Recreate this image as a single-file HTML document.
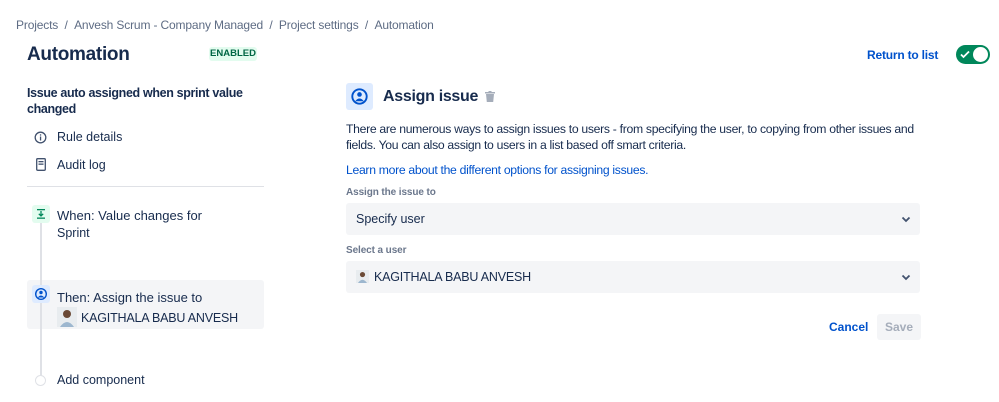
<!DOCTYPE html>
<html><head><meta charset="utf-8"><style>
*{margin:0;padding:0;box-sizing:border-box}
body{width:999px;height:402px;background:#fff;font-family:"Liberation Sans",sans-serif;color:#172b4d;position:relative;overflow:hidden;font-size:12.5px}
.a{position:absolute;white-space:nowrap}
.sel{position:absolute;left:346px;width:574px;height:32px;background:#f4f5f7;border-radius:3px}
.chev{position:absolute;right:8px;top:10px}
</style></head><body>
<div class="a" style="left:16px;top:18px;color:#5e6c84;font-size:12px;letter-spacing:-0.15px">Projects&nbsp;&nbsp;/&nbsp;&nbsp;Anvesh Scrum - Company Managed&nbsp;&nbsp;/&nbsp;&nbsp;Project settings&nbsp;&nbsp;/&nbsp;&nbsp;Automation</div>
<div class="a" style="left:27px;top:44px;font-size:19px;font-weight:bold;letter-spacing:-0.3px">Automation</div>
<div class="a" style="left:209px;top:47px;width:48px;height:14px;background:#e3fcef;color:#006644;font-size:9.5px;font-weight:bold;text-align:center;line-height:14px;border-radius:3px">ENABLED</div>
<div class="a" style="left:27px;top:85px;font-size:12.5px;font-weight:bold;line-height:16px;letter-spacing:-0.35px">Issue auto assigned when sprint value<br>changed</div>
<svg class="a" style="left:34px;top:131px" width="13" height="13" viewBox="0 0 13 13"><circle cx="6.5" cy="6.5" r="5.3" fill="none" stroke="#42526e" stroke-width="1.3"/><rect x="5.9" y="5.5" width="1.3" height="4" fill="#42526e"/><rect x="5.9" y="3.3" width="1.3" height="1.3" fill="#42526e"/></svg>
<div class="a" style="left:57px;top:130px">Rule details</div>
<svg class="a" style="left:36px;top:158px" width="10" height="13" viewBox="0 0 10 13"><rect x="0.7" y="0.7" width="8.6" height="11.6" rx="1" fill="none" stroke="#42526e" stroke-width="1.3"/><rect x="2.5" y="3" width="5" height="1.3" fill="#42526e"/><rect x="2.5" y="5.5" width="5" height="1.3" fill="#42526e"/></svg>
<div class="a" style="left:57px;top:158px">Audit log</div>
<div class="a" style="left:27px;top:186px;width:237px;height:1px;background:#dfe1e6"></div>
<div class="a" style="left:27px;top:280px;width:237px;height:49px;background:#f4f5f7;border-radius:3px"></div>
<div class="a" style="left:40px;top:215px;width:2px;height:162px;background:#dfe1e6"></div>
<div class="a" style="left:32px;top:205px;width:18px;height:18px;background:#e3fcef;border-radius:3px"></div>
<svg class="a" style="left:35px;top:208px" width="12" height="12" viewBox="0 0 12 12"><rect x="2" y="1" width="8" height="1.3" fill="#00875a"/><rect x="2" y="9.5" width="8" height="1.3" fill="#00875a"/><path d="M6 3v5M3.8 5.8L6 8l2.2-2.2" stroke="#00875a" stroke-width="1.3" fill="none"/></svg>
<div class="a" style="left:57px;top:208px;font-size:13px">When: Value changes for</div>
<div class="a" style="left:57px;top:226px">Sprint</div>
<div class="a" style="left:32px;top:285px;width:18px;height:18px;background:#deebff;border-radius:3px"></div>
<svg class="a" style="left:34px;top:287px" width="14" height="14" viewBox="0 0 14 14"><circle cx="7" cy="7" r="6" fill="#0052cc"/><circle cx="7" cy="7" r="4.6" fill="#deebff"/><circle cx="7" cy="5.5" r="1.7" fill="#0052cc"/><path d="M3.8 10.5q3.2-4 6.4 0" fill="#0052cc"/></svg>
<div class="a" style="left:57px;top:290px;font-size:13px">Then: Assign the issue to</div>
<svg class="a" style="left:57px;top:307px" width="20" height="20" viewBox="0 0 20 20"><rect width="20" height="20" fill="#e8ecef"/><circle cx="10" cy="7" r="4" fill="#6b4a36"/><path d="M3 20q7-10 14 0z" fill="#9db7cf"/></svg>
<div class="a" style="left:81px;top:311px;letter-spacing:-0.2px">KAGITHALA BABU ANVESH</div>
<div class="a" style="left:35px;top:375px;width:11px;height:11px;border:1.5px solid #dfe1e6;border-radius:50%;background:#fff"></div>
<div class="a" style="left:57px;top:373px">Add component</div>

<div class="a" style="left:346px;top:83px;width:27px;height:27px;background:#deebff;border-radius:3px"></div>
<svg class="a" style="left:350px;top:87px" width="19" height="19" viewBox="0 0 14 14"><circle cx="7" cy="7" r="6" fill="#0052cc"/><circle cx="7" cy="7" r="4.6" fill="#deebff"/><circle cx="7" cy="5.5" r="1.7" fill="#0052cc"/><path d="M3.8 10.5q3.2-4 6.4 0" fill="#0052cc"/></svg>
<div class="a" style="left:383px;top:88px;font-size:16px;font-weight:bold;letter-spacing:-0.3px">Assign issue</div>
<svg class="a" style="left:485px;top:91px" width="10" height="11" viewBox="0 0 10 11"><rect x="0" y="1" width="10" height="1.5" fill="#a5adba"/><rect x="3.5" y="0" width="3" height="1.5" fill="#a5adba"/><path d="M1 3h8l-0.8 8H1.8z" fill="#a5adba"/></svg>
<div class="a" style="left:346px;top:121px;line-height:16px;font-size:12.2px;letter-spacing:-0.3px">There are numerous ways to assign issues to users - from specifying the user, to copying from other issues and<br>fields. You can also assign to users in a list based off smart criteria.</div>
<div class="a" style="left:346px;top:163px;color:#0052cc;font-size:12.2px;letter-spacing:-0.3px">Learn more about the different options for assigning issues.</div>
<div class="a" style="left:346px;top:187px;font-size:10px;color:#6b778c;font-weight:bold;letter-spacing:-0.1px">Assign the issue to</div>
<div class="sel" style="top:203px"><div class="a" style="left:10px;top:9px">Specify user</div><svg class="chev" width="12" height="12" viewBox="0 0 12 12"><path d="M2.5 4.5L6 8l3.5-3.5" stroke="#42526e" stroke-width="1.8" fill="none"/></svg></div>
<div class="a" style="left:346px;top:245px;font-size:10px;color:#6b778c;font-weight:bold;letter-spacing:-0.1px">Select a user</div>
<div class="sel" style="top:261px"><svg class="a" style="left:10px;top:9px" width="13" height="13" viewBox="0 0 20 20"><rect width="20" height="20" fill="#e8ecef"/><circle cx="10" cy="7" r="4" fill="#6b4a36"/><path d="M3 20q7-10 14 0z" fill="#9db7cf"/></svg><div class="a" style="left:28px;top:9px;letter-spacing:-0.2px">KAGITHALA BABU ANVESH</div><svg class="chev" width="12" height="12" viewBox="0 0 12 12"><path d="M2.5 4.5L6 8l3.5-3.5" stroke="#42526e" stroke-width="1.8" fill="none"/></svg></div>
<div class="a" style="left:829px;top:320px;color:#0052cc;font-weight:bold;font-size:12px">Cancel</div>
<div class="a" style="left:877px;top:314px;width:44px;height:26px;background:#f4f5f7;border-radius:3px;color:#a5adba;font-weight:bold;text-align:center;line-height:26px;font-size:12px">Save</div>

<div class="a" style="left:867px;top:48px;color:#0052cc;font-weight:bold;font-size:12px;letter-spacing:-0.2px">Return to list</div>
<div class="a" style="left:956px;top:45px;width:34px;height:19px;background:#00875a;border-radius:10px"></div>
<div class="a" style="left:973px;top:47px;width:15px;height:15px;background:#fff;border-radius:50%"></div>
<svg class="a" style="left:960px;top:50px" width="10" height="9" viewBox="0 0 10 9"><path d="M1 4.5l2.5 2.5L9 1.5" stroke="#fff" stroke-width="1.8" fill="none"/></svg>
</body></html>
